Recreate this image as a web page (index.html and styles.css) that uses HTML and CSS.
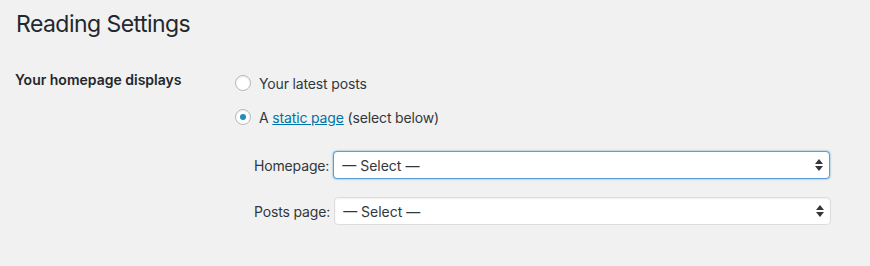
FILE: index.html
```html
<!DOCTYPE html>
<html lang="en">
<head>
    <meta charset="UTF-8">
    <title>Reading Settings</title>
    <link rel="stylesheet" href="styles.css">
</head>
<body>
    <div class="wrap">
        <h1>Reading Settings</h1>

        <div class="form-row">
            <div class="row-label">Your homepage displays</div>
            <div class="row-field">
                <label class="choice"><span class="radio"></span>Your latest posts</label>
                <label class="choice"><span class="radio checked"></span>A&nbsp;<a href="#">static page</a>&nbsp;(select below)</label>

                <ul class="page-selects">
                    <li>
                        <label for="page-on-front">Homepage:</label>
                        <div class="select-box focused">
                            <select id="page-on-front"><option>— Select —</option></select>
                            <svg class="arrows" width="8" height="14" viewBox="0 0 8 14"><path d="M4 1 L8 6 L0 6 Z M0 8 L8 8 L4 13 Z" fill="#32373c"/></svg>
                        </div>
                    </li>
                    <li>
                        <label for="page-for-posts">Posts page:</label>
                        <div class="select-box">
                            <select id="page-for-posts"><option>— Select —</option></select>
                            <svg class="arrows" width="8" height="14" viewBox="0 0 8 14"><path d="M4 1 L8 6 L0 6 Z M0 8 L8 8 L4 13 Z" fill="#32373c"/></svg>
                        </div>
                    </li>
                </ul>
            </div>
        </div>
    </div>
</body>
</html>
```

FILE: styles.css
```css
body {
    margin: 0;
    background: #f1f1f1;
    color: #23282d;
    font-family: Inter, 'Liberation Sans', Arial, sans-serif;
    font-size: 14px;
    letter-spacing: -0.15px;
}

.wrap {
    padding: 0 15px;
}

h1 {
    margin: 0;
    padding: 10px 0 0 1px;
    font-size: 23px;
    font-weight: 400;
    line-height: 29px;
    letter-spacing: -0.55px;
    color: #23282d;
}

.form-row {
    display: flex;
    margin-top: 32px;
}

.row-label {
    width: 220px;
    font-weight: 600;
    line-height: 18px;
    letter-spacing: 0;
}

.row-field {
    display: flex;
    flex-direction: column;
    padding-top: 4px;
}

.choice {
    display: flex;
    align-items: center;
    height: 16px;
    margin-bottom: 18px;
    color: #32373c;
}

.choice a {
    color: #0073aa;
    text-decoration: underline;
}

.radio {
    width: 16px;
    height: 16px;
    box-sizing: border-box;
    border: 1px solid #b4b9be;
    border-radius: 50%;
    background: #fff;
    box-shadow: inset 0 1px 2px rgba(0, 0, 0, 0.07);
    margin-right: 8px;
    display: flex;
    align-items: center;
    justify-content: center;
}

.radio.checked::before {
    content: '';
    width: 6px;
    height: 6px;
    border-radius: 50%;
    background: #1e8cbe;
}

.page-selects {
    list-style: none;
    margin: 8px 0 0 19px;
    padding: 0;
}

.page-selects li {
    display: flex;
    align-items: center;
    gap: 4px;
    margin-bottom: 18px;
    color: #32373c;
}

.select-box {
    position: relative;
    width: 497px;
    height: 28px;
}

.select-box select {
    appearance: none;
    -webkit-appearance: none;
    width: 100%;
    height: 100%;
    box-sizing: border-box;
    margin: 0;
    padding: 0 24px 0 8px;
    border: 1px solid #ddd;
    border-radius: 4px;
    background: #fff;
    box-shadow: inset 0 1px 2px rgba(0, 0, 0, 0.07);
    font: inherit;
    color: #32373c;
    outline: none;
}

.select-box.focused select {
    border-color: #5b9dd9;
    box-shadow: 0 0 2px rgba(30, 140, 190, 0.8);
}

.arrows {
    position: absolute;
    right: 7px;
    top: 7px;
    pointer-events: none;
}
```
